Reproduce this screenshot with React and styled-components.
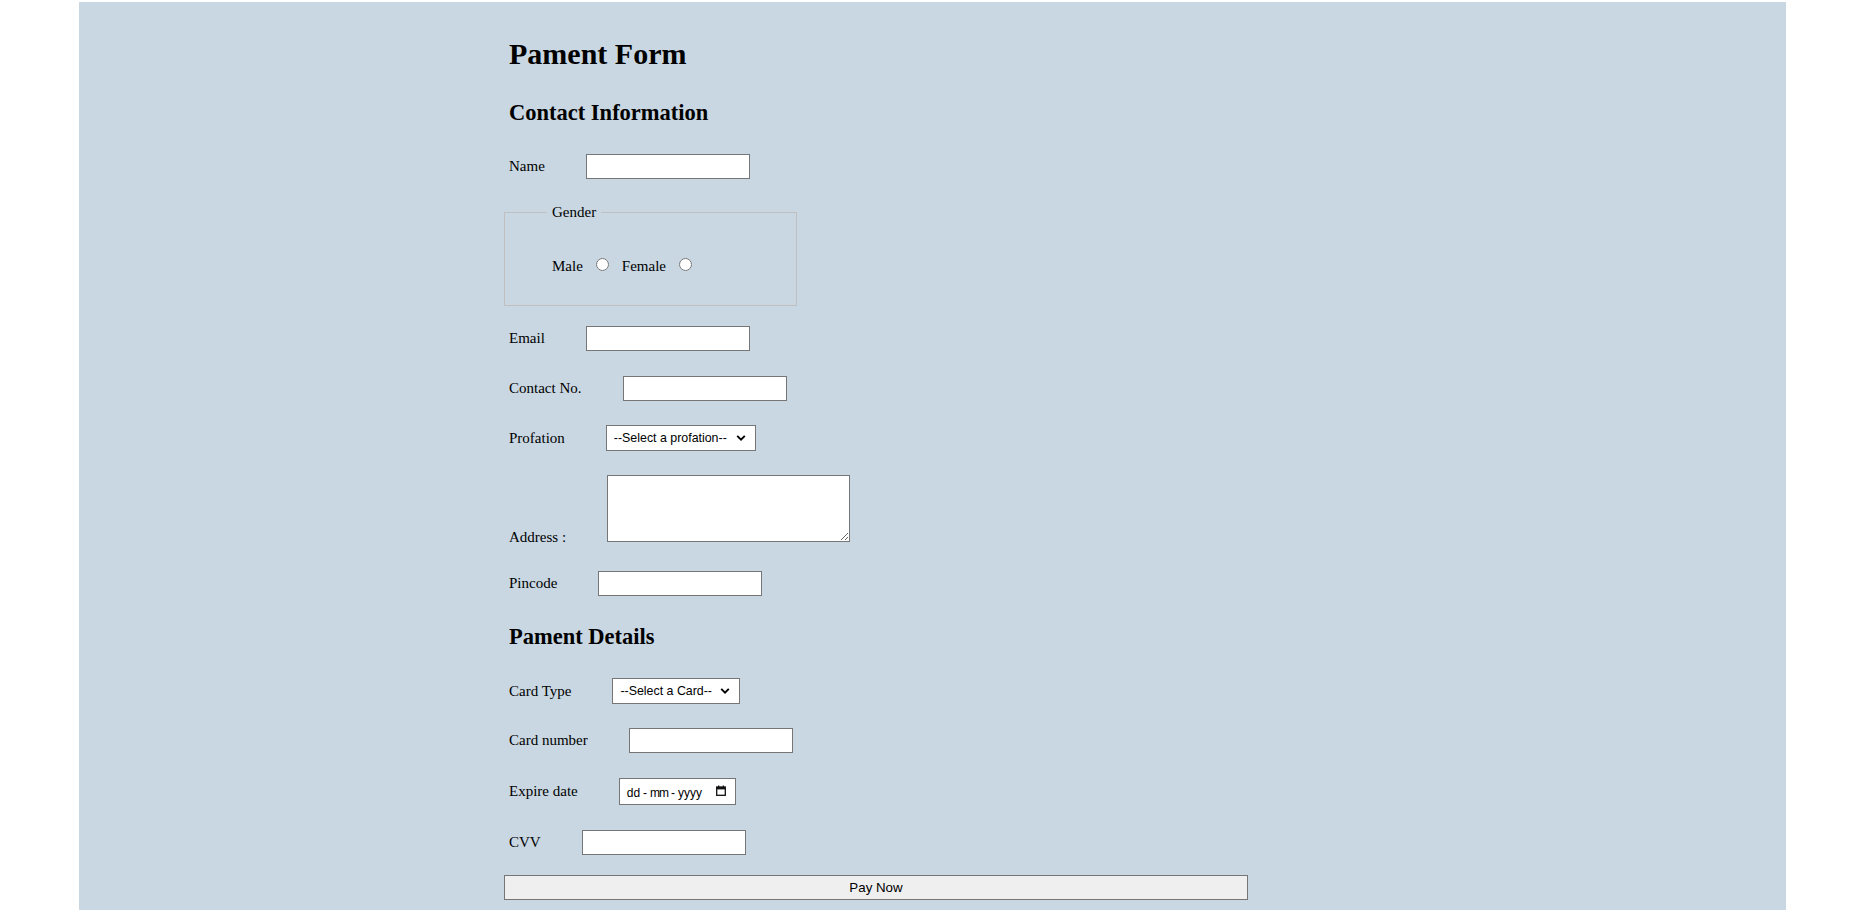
import React from "react";
import styled, { createGlobalStyle } from "styled-components";

const GlobalStyle = createGlobalStyle`
  html, body {
    margin: 0;
    padding: 0;
    background: #ffffff;
  }
  body {
    font-family: "Liberation Serif", "Times New Roman", serif;
    color: #000;
  }
`;

const Panel = styled.main`
  box-sizing: border-box;
  margin: 2px 0 0 79px;
  width: 1707px;
  height: 908px;
  background: #c9d7e2;
  padding: 34px 0 0 425px;
`;

const Form = styled.form`
  display: flex;
  flex-direction: column;
  align-items: flex-start;
  width: 744px;
`;

const Title = styled.h1`
  margin: 0 0 0 5px;
  font: 700 30px/36px "Liberation Serif", "Times New Roman", serif;
`;

const Section = styled.h2`
  margin: ${(p) => p.$top}px 0 0 5px;
  font: 700 22.5px/27px "Liberation Serif", "Times New Roman", serif;
`;

const Row = styled.div`
  display: flex;
  align-items: ${(p) => p.$align || "center"};
  margin-top: ${(p) => p.$top}px;
  padding-left: 5px;
`;

const Label = styled.label`
  font: 400 15px/17px "Liberation Serif", "Times New Roman", serif;
  margin-right: 41px;
  margin-bottom: ${(p) => p.$drop || 0}px;
  white-space: nowrap;
`;

const TextInput = styled.input`
  box-sizing: border-box;
  width: 164px;
  height: 25px;
  margin: 0;
  padding: 1px 2px;
  border: 1px solid #767676;
  border-radius: 0;
  background: #fff;
  font: 400 13.33px "Liberation Sans", Arial, sans-serif;
  outline: none;
`;

const Fieldset = styled.fieldset`
  box-sizing: border-box;
  width: 293px;
  margin: 24px 0 0 0;
  padding: 37px 0 30px 42px;
  border: 1px solid #c0c0c0;
`;

const Legend = styled.legend`
  padding: 0 5px;
  font: 400 15px/18px "Liberation Serif", "Times New Roman", serif;
`;

const RadioRow = styled.div`
  display: flex;
  align-items: center;
  height: 17px;
  padding-left: 5px;
`;

const RadioText = styled.label`
  font: 400 15px/17px "Liberation Serif", "Times New Roman", serif;
`;

const Radio = styled.input.attrs({ type: "radio" })`
  width: 13px;
  height: 13px;
  margin: 0 13px 4px 13px;
`;

const SelectWrap = styled.div`
  position: relative;
  display: inline-flex;
`;

const Select = styled.select`
  appearance: none;
  -webkit-appearance: none;
  box-sizing: border-box;
  width: ${(p) => p.$w}px;
  height: 26px;
  margin: 0;
  padding: 0 0 1px 7px;
  border: 1px solid #767676;
  border-radius: 0;
  background: #fff;
  color: #000;
  font: 400 12.4px "Liberation Sans", Arial, sans-serif;
  outline: none;
`;

const Chevron = styled.svg`
  position: absolute;
  right: 10px;
  top: 50%;
  transform: translateY(-50%);
  pointer-events: none;
`;

const TextArea = styled.textarea`
  box-sizing: border-box;
  width: 243px;
  height: 67px;
  margin: 0;
  padding: 2px;
  border: 1px solid #767676;
  border-radius: 0;
  background: #fff;
  resize: both;
  font: 400 13.33px "Liberation Mono", monospace;
  outline: none;
`;

const DateBox = styled.div`
  box-sizing: border-box;
  display: flex;
  align-items: center;
  justify-content: space-between;
  width: 117px;
  height: 27px;
  padding: 0 9px 0 7px;
  border: 1px solid #767676;
  background: #fff;
`;

const DateText = styled.div`
  display: flex;
  align-items: center;
  gap: 3px;
  font: 400 12px "Liberation Sans", Arial, sans-serif;
  color: #000;
  margin-top: 2px;
`;

const Segment = styled.span`
  letter-spacing: ${(p) => p.$ls || 0}px;
`;

const CalIcon = styled.svg`
  margin-top: -3px;
`;

const PayButton = styled.button`
  box-sizing: border-box;
  width: 744px;
  height: 25px;
  margin-top: 20px;
  padding: 0;
  border: 1px solid #767676;
  border-radius: 0;
  background: #efefef;
  color: #000;
  font: 400 13.33px "Liberation Sans", Arial, sans-serif;
  cursor: pointer;
`;

function ChevronIcon() {
  return (
    <Chevron width="10" height="7" viewBox="0 0 10 7">
      <path d="M1.2 1.4 L5 5.2 L8.8 1.4" fill="none" stroke="#000" strokeWidth="1.9" />
    </Chevron>
  );
}

function Dropdown({ width, placeholder }) {
  return (
    <SelectWrap>
      <Select $w={width} defaultValue="">
        <option value="">{placeholder}</option>
      </Select>
      <ChevronIcon />
    </SelectWrap>
  );
}

export default function App() {
  return (
    <>
      <GlobalStyle />
      <Panel>
        <Form onSubmit={(e) => e.preventDefault()}>
          <Title>Pament Form</Title>
          <Section $top={27}>Contact Information</Section>

          <Row $top={28}>
            <Label htmlFor="name">Name</Label>
            <TextInput id="name" type="text" />
          </Row>

          <Fieldset>
            <Legend>Gender</Legend>
            <RadioRow>
              <RadioText htmlFor="male">Male</RadioText>
              <Radio id="male" name="gender" />
              <RadioText htmlFor="female">Female</RadioText>
              <Radio id="female" name="gender" />
            </RadioRow>
          </Fieldset>

          <Row $top={20}>
            <Label htmlFor="email">Email</Label>
            <TextInput id="email" type="email" />
          </Row>

          <Row $top={25}>
            <Label htmlFor="contact">Contact No.</Label>
            <TextInput id="contact" type="tel" />
          </Row>

          <Row $top={24}>
            <Label>Profation</Label>
            <Dropdown width={150} placeholder="--Select a profation--" />
          </Row>

          <Row $top={24} $align="flex-end">
            <Label htmlFor="address" $drop={-4}>Address :</Label>
            <TextArea id="address" />
          </Row>

          <Row $top={29}>
            <Label htmlFor="pincode">Pincode</Label>
            <TextInput id="pincode" type="text" />
          </Row>

          <Section $top={27}>Pament Details</Section>

          <Row $top={28}>
            <Label>Card Type</Label>
            <Dropdown width={128} placeholder="--Select a Card--" />
          </Row>

          <Row $top={24}>
            <Label htmlFor="cardno">Card number</Label>
            <TextInput id="cardno" type="text" />
          </Row>

          <Row $top={25}>
            <Label>Expire date</Label>
            <DateBox>
              <DateText>
                <Segment>dd</Segment>
                <Segment>-</Segment>
                <Segment $ls={-1}>mm</Segment>
                <Segment>-</Segment>
                <Segment>yyyy</Segment>
              </DateText>
              <CalIcon width="10" height="11" viewBox="0 0 10 11">
                <rect x="0.7" y="2" width="8.6" height="8.3" fill="none" stroke="#111" strokeWidth="1.3" />
                <rect x="0.7" y="2" width="8.6" height="2.4" fill="#111" />
                <rect x="2" y="0.5" width="1.3" height="2" fill="#111" />
                <rect x="6.7" y="0.5" width="1.3" height="2" fill="#111" />
              </CalIcon>
            </DateBox>
          </Row>

          <Row $top={25}>
            <Label htmlFor="cvv">CVV</Label>
            <TextInput id="cvv" type="text" />
          </Row>

          <PayButton type="submit">Pay Now</PayButton>
        </Form>
      </Panel>
    </>
  );
}
